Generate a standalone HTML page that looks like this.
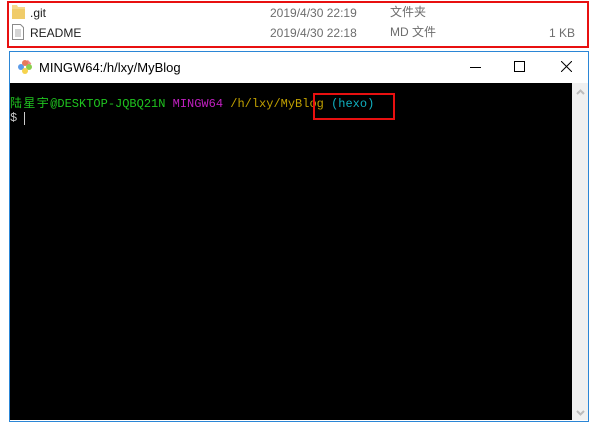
<!DOCTYPE html>
<html><head><meta charset="utf-8"><style>
body{margin:0;width:595px;height:427px;background:#fff;position:relative;overflow:hidden;font-family:"Liberation Sans","Noto Sans CJK SC",sans-serif}
.a{position:absolute}
.f{font-size:12px;color:#1e1e1e}
.g{font-size:12px;color:#6d6d6d;line-height:14px}
.t{font-family:"Liberation Mono","Noto Sans CJK SC",monospace;font-size:12px;white-space:pre;line-height:14px}
</style></head><body>
<div class="a" style="left:7px;top:1px;width:578px;height:43px;border:2px solid #e81010"></div>
<svg class="a" style="left:12px;top:4px" width="14" height="16"><path d="M0 1h5l1 2h7v12H0z" fill="#f5d98a"/><path d="M0 5h13v10H0z" fill="#f0cc6a"/></svg>
<svg class="a" style="left:12px;top:24px" width="12" height="16"><path d="M.5 .5h8l3 3v12h-11z" fill="#fff" stroke="#8a8a8a"/><path d="M3 6h6M3 8h6M3 10h6M3 12h6" stroke="#aaa"/></svg>
<div class="a f" style="left:30px;top:6px">.git</div>
<div class="a f" style="left:30px;top:26px">README</div>
<div class="a g" style="left:270px;top:6px">2019/4/30 22:19</div>
<div class="a g" style="left:270px;top:26px">2019/4/30 22:18</div>
<div class="a g" style="left:390px;top:5px">文件夹</div>
<div class="a g" style="left:390px;top:25px">MD 文件</div>
<div class="a g" style="left:549px;top:26px">1 KB</div>

<div class="a" style="left:9px;top:51px;width:578px;height:369px;border:1px solid #2b86d6;background:#fff"></div>
<svg class="a" style="left:17px;top:59px" width="16" height="16"><rect x="5" y="1" width="5" height="5" transform="rotate(45 8 8)" fill="#e88"/><circle cx="4" cy="8" r="3" fill="#5b9be8"/><circle cx="12" cy="8" r="3" fill="#8ccf4d"/><circle cx="8" cy="12" r="3" fill="#f6d34d"/><circle cx="8" cy="4" r="3" fill="#e87a5a"/></svg>
<div class="a" style="left:39px;top:60px;font-size:13px;color:#000">MINGW64:/h/lxy/MyBlog</div>
<div class="a" style="left:470px;top:67px;width:11px;height:1px;background:#000"></div>
<div class="a" style="left:514px;top:61px;width:9px;height:9px;border:1px solid #000"></div>
<svg class="a" style="left:561px;top:61px" width="11" height="11"><path d="M0 0L11 11M11 0L0 11" stroke="#000"/></svg>
<div class="a" style="left:10px;top:83px;width:562px;height:337px;background:#000"></div>
<div class="a" style="left:572px;top:83px;width:16px;height:337px;background:#f0f0f0"></div>
<svg class="a" style="left:576px;top:89px" width="9" height="6"><path d="M1 5l3.5-3.5L8 5" stroke="#bbb" stroke-width="2" fill="none"/></svg>
<svg class="a" style="left:576px;top:410px" width="9" height="6"><path d="M1 1l3.5 3.5L8 1" stroke="#bbb" stroke-width="2" fill="none"/></svg>
<div class="a t" style="left:10px;top:97px"><span style="color:#1fc41f"><span style="letter-spacing:1.4px">陆星宇</span>@DESKTOP-JQBQ21N</span> <span style="color:#c020c0">MINGW64</span> <span style="color:#c0a000">/h/lxy/MyBlog</span> <span style="color:#10b0c0">(hexo)</span></div>
<div class="a t" style="left:10px;top:111px;color:#ccc">$ </div>
<div class="a" style="left:24px;top:112px;width:1px;height:13px;background:#ccc"></div>
<div class="a" style="left:313px;top:93px;width:78px;height:23px;border:2px solid #e81010"></div>
</body></html>
